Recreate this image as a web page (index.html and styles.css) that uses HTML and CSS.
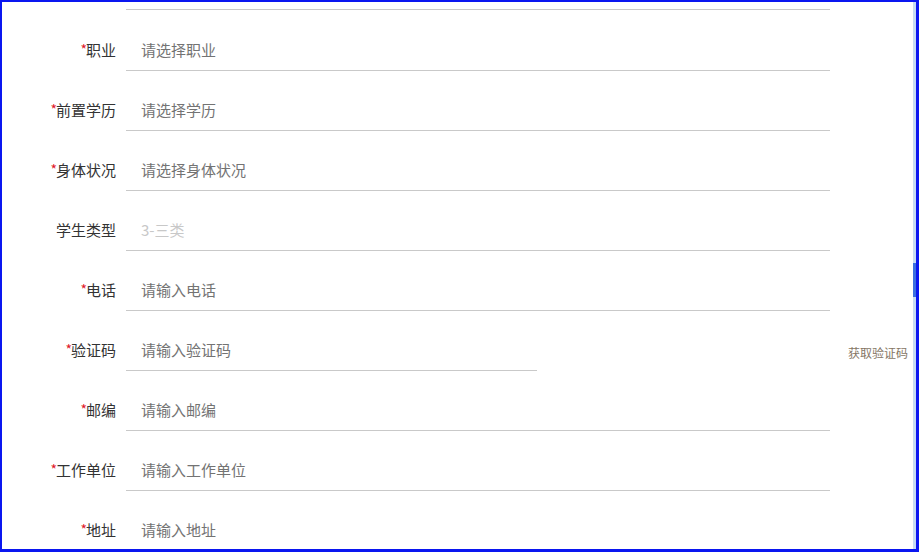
FILE: index.html
```html
<!DOCTYPE html>
<html lang="zh-CN">
<head>
<meta charset="utf-8">
<title>表单</title>
<link rel="stylesheet" href="styles.css">
</head>
<body>
<div class="frame">
  <div class="content">
    <div class="row row-cut">
      <div class="label"></div>
      <div class="field"></div>
    </div>
    <div class="row">
      <div class="label"><span class="req">*</span>职业</div>
      <div class="field">请选择职业</div>
    </div>
    <div class="row">
      <div class="label"><span class="req">*</span>前置学历</div>
      <div class="field">请选择学历</div>
    </div>
    <div class="row">
      <div class="label"><span class="req">*</span>身体状况</div>
      <div class="field">请选择身体状况</div>
    </div>
    <div class="row">
      <div class="label">学生类型</div>
      <div class="field disabled">3-三类</div>
    </div>
    <div class="row">
      <div class="label"><span class="req">*</span>电话</div>
      <div class="field">请输入电话</div>
    </div>
    <div class="row">
      <div class="label"><span class="req">*</span>验证码</div>
      <div class="field short">请输入验证码</div>
      <div class="code-btn">获取验证码</div>
    </div>
    <div class="row">
      <div class="label"><span class="req">*</span>邮编</div>
      <div class="field">请输入邮编</div>
    </div>
    <div class="row">
      <div class="label"><span class="req">*</span>工作单位</div>
      <div class="field">请输入工作单位</div>
    </div>
    <div class="row">
      <div class="label"><span class="req">*</span>地址</div>
      <div class="field">请输入地址</div>
    </div>
  </div>
  <div class="scrollbar"><div class="thumb"></div></div>
</div>
</body>
</html>
```

FILE: styles.css
```css
html, body {
  margin: 0;
  padding: 0;
  background: #ffffff;
}
body {
  font-family: "Noto Sans CJK SC", "Microsoft YaHei", sans-serif;
  font-size: 15px;
}
.frame {
  width: 919px;
  height: 552px;
  box-sizing: border-box;
  border-style: solid;
  border-color: #0a16f0;
  border-width: 2px 3px 3px 2px;
  display: flex;
  overflow: hidden;
  background: #ffffff;
}
.content {
  flex: 1;
  overflow: hidden;
}
.scrollbar {
  width: 3px;
  flex: none;
  background: #c6dbf2;
  padding-top: 261px;
  box-sizing: border-box;
}
.thumb {
  height: 34px;
  background: #3a6fe0;
}
.row {
  display: flex;
  height: 60px;
}
.row-cut {
  height: 9px;
}
.row-cut .label,
.row-cut .field {
  height: 8px;
  padding-top: 0;
}
.label {
  width: 114px;
  margin-right: 10px;
  height: 59px;
  padding-top: 17px;
  box-sizing: border-box;
  display: flex;
  align-items: center;
  justify-content: flex-end;
  color: #333333;
  white-space: nowrap;
  flex: none;
}
.req {
  color: #e0182a;
  font-size: 14px;
  margin-right: -1px;
}
.field {
  width: 704px;
  height: 60px;
  padding: 17px 0 0 15px;
  box-sizing: border-box;
  border-bottom: 1px solid #c9c9c9;
  display: flex;
  align-items: center;
  color: #737373;
  flex: none;
  white-space: nowrap;
}
.field.disabled {
  color: #c8c8c8;
}
.field.short {
  width: 411px;
}
.code-btn {
  margin-left: 311px;
  height: 60px;
  padding-top: 22px;
  box-sizing: border-box;
  display: flex;
  align-items: center;
  font-size: 12px;
  color: #857665;
  white-space: nowrap;
}
```
